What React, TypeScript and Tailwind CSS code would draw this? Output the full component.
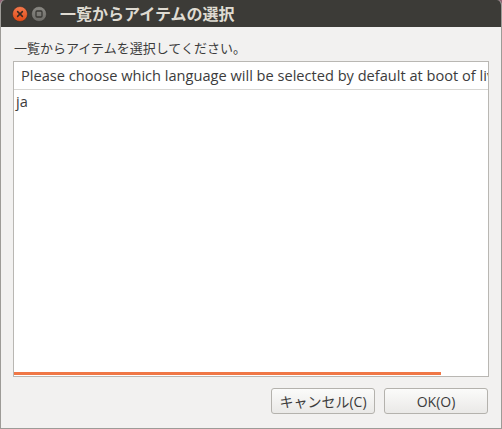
const font = { fontFamily: '"Open Sans", "Noto Sans CJK JP", sans-serif' };

function TitleButtons() {
  return (
    <div className="flex items-center gap-[3px] pl-[11px]">
      <svg width="16" height="16" viewBox="0 0 16 16">
        <defs>
          <linearGradient id="cl" x1="0" y1="0" x2="0" y2="1">
            <stop offset="0" stopColor="#f47a4e" />
            <stop offset="1" stopColor="#df4a16" />
          </linearGradient>
        </defs>
        <circle cx="8" cy="8" r="7.5" fill="url(#cl)" stroke="#2c2b27" strokeWidth="0.5" />
        <path d="M5.6 5.6 L10.4 10.4 M10.4 5.6 L5.6 10.4" stroke="#3a2a22" strokeWidth="1.5" strokeLinecap="round" />
      </svg>
      <svg width="16" height="16" viewBox="0 0 16 16">
        <defs>
          <linearGradient id="mx" x1="0" y1="0" x2="0" y2="1">
            <stop offset="0" stopColor="#8a8984" />
            <stop offset="1" stopColor="#6c6b67" />
          </linearGradient>
        </defs>
        <circle cx="8" cy="8" r="7.5" fill="url(#mx)" stroke="#2c2b27" strokeWidth="0.5" />
        <rect x="5" y="5" width="6" height="6" rx="1" fill="none" stroke="#3a3935" strokeWidth="1.3" />
      </svg>
    </div>
  );
}

export default function App() {
  return (
    <div className="h-[429px] w-[502px] overflow-hidden bg-[#8e6474]" style={font}>
      <div className="flex h-full flex-col overflow-hidden rounded-t-[5px] border-x border-b border-[#9d9b97] bg-[#f2f1f0]">
        <div className="flex h-[27px] shrink-0 items-center bg-[#3c3b37]">
          <TitleButtons />
          <span className="ml-[13px] text-[16px] font-bold text-[#dfdbd2]">一覧からアイテムの選択</span>
        </div>

        <div className="flex flex-1 flex-col px-[12px]">
          <p className="mt-[10px] h-[22px] pl-[1px] text-[13px] leading-[22px] text-[#3c3c3c]">
            一覧からアイテムを選択してください。
          </p>

          <div className="mt-[2px] flex h-[316px] flex-col overflow-hidden border border-[#b9b7b3] bg-white">
            <div className="flex h-[28px] shrink-0 items-center overflow-hidden border-b border-[#d8d7d4] pl-[7px]">
              <span className="whitespace-nowrap text-[14.6px] text-[#3c3c3c]">
                Please choose which language will be selected by default at boot of live
              </span>
            </div>
            <div className="h-[22px] pl-[2px] text-[14.6px] leading-[22px] text-[#3c3c3c]">ja</div>
            <div className="flex-1" />
            <div className="mb-[1px] h-[3px] w-[427px] bg-[#f07746]" />
          </div>

          <div className="mt-[11px] flex justify-end gap-[9px] pr-[1px]">
            <button className="h-[26px] w-[104px] rounded-[3px] border border-[#b4b2ad] bg-gradient-to-b from-[#fbfbfa] to-[#eae9e7] text-[14px] text-[#3c3c3c]">
              キャンセル(C)
            </button>
            <button className="h-[26px] w-[104px] rounded-[3px] border border-[#b4b2ad] bg-gradient-to-b from-[#fbfbfa] to-[#eae9e7] text-[14px] text-[#3c3c3c]">
              OK(O)
            </button>
          </div>
        </div>
      </div>
    </div>
  );
}
